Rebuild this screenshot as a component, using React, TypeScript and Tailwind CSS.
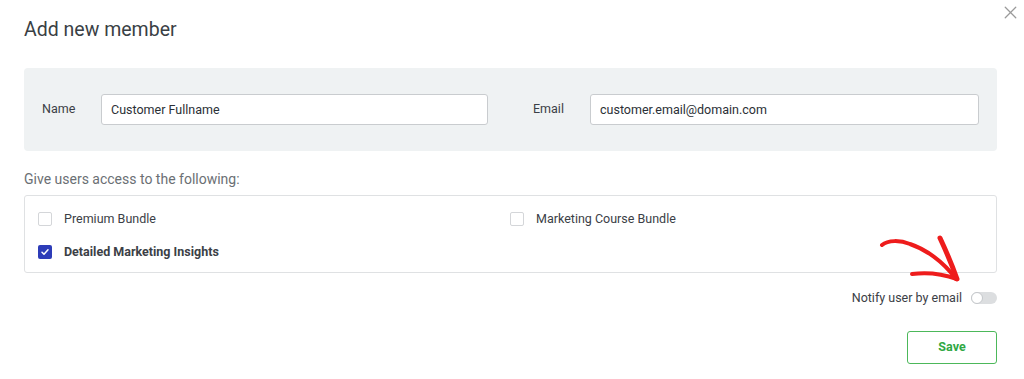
import { X } from 'lucide-react'

const font = { fontFamily: 'Roboto, "Noto Sans", sans-serif' }

function Checkbox({ checked }: { checked?: boolean }) {
  if (checked) {
    return (
      <span className="flex h-[14px] w-[14px] shrink-0 items-center justify-center rounded-[2px] bg-[#2d3cb8]">
        <svg width="10" height="10" viewBox="0 0 10 10" fill="none">
          <path d="M2 5.2l2 2 4-4.4" stroke="#fff" strokeWidth="1.5" strokeLinecap="round" strokeLinejoin="round" />
        </svg>
      </span>
    )
  }
  return <span className="h-[14px] w-[14px] shrink-0 rounded-[2px] border border-[#d4d6d9] bg-white" />
}

function Option({ label, checked }: { label: string; checked?: boolean }) {
  return (
    <label className="flex h-[33px] items-center gap-[12px]">
      <Checkbox checked={checked} />
      <span className={`text-[12.5px] text-[#3b4046] ${checked ? 'font-bold' : ''}`}>{label}</span>
    </label>
  )
}

export default function App() {
  return (
    <div className="relative h-[379px] w-[1024px] bg-white pl-6 pr-[27px]" style={font}>
      <button className="absolute right-[3px] top-[2px] text-[#9a9a9a]">
        <X size={21} strokeWidth={1.5} />
      </button>

      <h2 className="pt-[17px] text-[19.5px] leading-[26px] text-[#3a3f45]">Add new member</h2>

      <div className="mt-[25px] flex h-[83px] items-center rounded-[4px] bg-[#eff2f3] pl-[18px] pr-[18px]">
        <span className="w-[59px] text-[12.5px] text-[#3b4046]">Name</span>
        <input
          readOnly
          value="Customer Fullname"
          className="h-[31px] w-[387px] rounded-[3px] border border-[#c9cccf] bg-white px-[9px] text-[12.5px] text-[#2b3036] outline-none"
        />
        <span className="ml-[45px] w-[57px] text-[12.5px] text-[#3b4046]">Email</span>
        <input
          readOnly
          value="customer.email@domain.com"
          className="h-[31px] flex-1 rounded-[3px] border border-[#c9cccf] bg-white px-[9px] text-[12.5px] text-[#2b3036] outline-none"
        />
      </div>

      <p className="mt-[19px] text-[14px] leading-[18px] text-[#6b6f74]">Give users access to the following:</p>

      <div className="mt-[7px] grid h-[78px] grid-cols-[472px_1fr] content-center rounded-[3px] border border-[#dfe1e3] px-[13px] pt-[3px]">
        <Option label="Premium Bundle" />
        <Option label="Marketing Course Bundle" />
        <Option label="Detailed Marketing Insights" checked />
      </div>

      <div className="relative mt-[16px] flex items-center justify-end gap-[9px]">
        <svg
          className="pointer-events-none absolute right-[34px] top-[-56px]"
          width="84"
          height="52"
          viewBox="884 236 84 52"
          fill="none"
        >
          <path
            d="M887 248 C 893 243, 905 243, 915 247 C 930 252, 948 264, 961 282"
            stroke="#ee1c1c"
            strokeWidth="4"
            strokeLinecap="round"
          />
          <path d="M945 241 C 952 256, 957 268, 962 282" stroke="#ee1c1c" strokeWidth="5" strokeLinecap="round" />
          <path d="M917 277 C 932 275, 948 277, 962 282" stroke="#ee1c1c" strokeWidth="4" strokeLinecap="round" />
        </svg>
        <span className="text-[12.5px] text-[#3b4046]">Notify user by email</span>
        <span className="relative h-[12px] w-[26px] rounded-full bg-[#dcdee0]">
          <span className="absolute left-0 top-0 h-[12px] w-[12px] rounded-full border border-[#c4c7ca] bg-white" />
        </span>
      </div>

      <div className="mt-[23px] flex justify-end">
        <button className="h-[33px] w-[90px] rounded-[3px] border border-[#4cb85a] text-[12.5px] font-bold text-[#2fa844]">
          Save
        </button>
      </div>
    </div>
  )
}
